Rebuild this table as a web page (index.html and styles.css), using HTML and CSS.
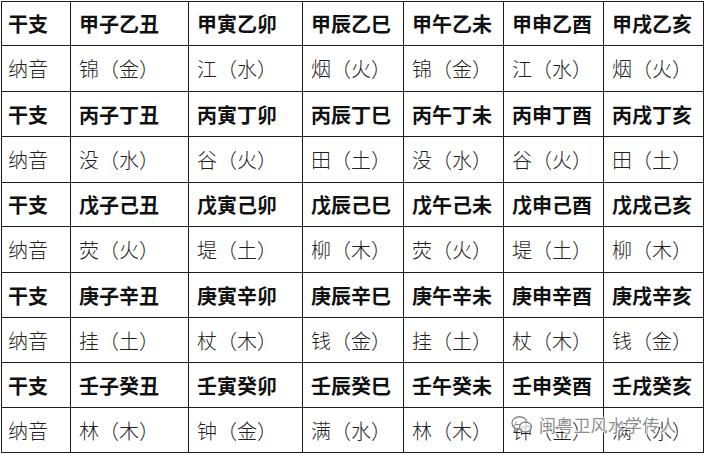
FILE: index.html
```html
<!DOCTYPE html>
<html lang="zh">
<head>
<meta charset="utf-8">
<title>六十甲子纳音表</title>
<link rel="stylesheet" href="styles.css">
</head>
<body>
<div class="sheet">
  <div class="table">
    <div class="c h first">干支</div><div class="c h">甲子乙丑</div><div class="c h">甲寅乙卯</div><div class="c h">甲辰乙巳</div><div class="c h">甲午乙未</div><div class="c h">甲申乙酉</div><div class="c h">甲戌乙亥</div>
    <div class="c n first">纳音</div><div class="c n">锦（金）</div><div class="c n">江（水）</div><div class="c n">烟（火）</div><div class="c n">锦（金）</div><div class="c n">江（水）</div><div class="c n">烟（火）</div>
    <div class="c h first">干支</div><div class="c h">丙子丁丑</div><div class="c h">丙寅丁卯</div><div class="c h">丙辰丁巳</div><div class="c h">丙午丁未</div><div class="c h">丙申丁酉</div><div class="c h">丙戌丁亥</div>
    <div class="c n first">纳音</div><div class="c n">没（水）</div><div class="c n">谷（火）</div><div class="c n">田（土）</div><div class="c n">没（水）</div><div class="c n">谷（火）</div><div class="c n">田（土）</div>
    <div class="c h first">干支</div><div class="c h">戊子己丑</div><div class="c h">戊寅己卯</div><div class="c h">戊辰己巳</div><div class="c h">戊午己未</div><div class="c h">戊申己酉</div><div class="c h">戊戌己亥</div>
    <div class="c n first">纳音</div><div class="c n">荧（火）</div><div class="c n">堤（土）</div><div class="c n">柳（木）</div><div class="c n">荧（火）</div><div class="c n">堤（土）</div><div class="c n">柳（木）</div>
    <div class="c h first">干支</div><div class="c h">庚子辛丑</div><div class="c h">庚寅辛卯</div><div class="c h">庚辰辛巳</div><div class="c h">庚午辛未</div><div class="c h">庚申辛酉</div><div class="c h">庚戌辛亥</div>
    <div class="c n first">纳音</div><div class="c n">挂（土）</div><div class="c n">杖（木）</div><div class="c n">钱（金）</div><div class="c n">挂（土）</div><div class="c n">杖（木）</div><div class="c n">钱（金）</div>
    <div class="c h first">干支</div><div class="c h">壬子癸丑</div><div class="c h">壬寅癸卯</div><div class="c h">壬辰癸巳</div><div class="c h">壬午癸未</div><div class="c h">壬申癸酉</div><div class="c h">壬戌癸亥</div>
    <div class="c n first">纳音</div><div class="c n">林（木）</div><div class="c n">钟（金）</div><div class="c n">满（水）</div><div class="c n">林（木）</div><div class="c n">钟（金）</div><div class="c n">满（水）</div>
  </div>
  <div class="watermark">
    <svg class="wm-icon" width="22" height="20" viewBox="0 0 22 20">
      <ellipse cx="8.5" cy="8" rx="7.5" ry="6.3" fill="#fff" fill-opacity="0.5" stroke="#8a8a8a" stroke-width="1.4"/>
      <path d="M4 13 L3 17 L7.5 14.2" fill="none" stroke="#8a8a8a" stroke-width="1.2"/>
      <ellipse cx="14.5" cy="12" rx="6" ry="5" fill="#fff" fill-opacity="0.7" stroke="#8a8a8a" stroke-width="1.4"/>
    </svg>
    <span class="wm-text">闽粤卫风水学传人</span>
  </div>
</div>
</body>
</html>
```
FILE: styles.css
```css
html, body {
  margin: 0;
  padding: 0;
  background: #fff;
}
.sheet {
  position: relative;
  width: 705px;
  height: 455px;
  padding: 1px 0 0 1px;
  box-sizing: border-box;
}
.table {
  display: grid;
  grid-template-columns: 69px 118px 114px 101px 100px 100px 100px;
  grid-template-rows: 44px 46px 45px 46px 44px 46px 45px 45px 45px 45px;
  border-left: 1px solid #1c1c1c;
  border-top: 1px solid #1c1c1c;
  width: max-content;
}
.c {
  border-right: 1px solid #1c1c1c;
  border-bottom: 1px solid #1c1c1c;
  display: flex;
  align-items: center;
  padding-left: 8px;
  font-size: 20px;
  white-space: nowrap;
  overflow: hidden;
  font-family: "Noto Sans CJK SC", "Noto Sans CJK JP", sans-serif;
}
.c.first {
  padding-left: 6px;
}
.h {
  font-weight: 700;
  color: #111;
}
.n {
  font-weight: 300;
  color: #1f1f1f;
}
.watermark {
  position: absolute;
  left: 511px;
  top: 412px;
  display: flex;
  align-items: center;
  gap: 6px;
}
.wm-text {
  font-family: "Noto Sans CJK SC", sans-serif;
  font-size: 17px;
  letter-spacing: 0.2px;
  color: rgba(120, 120, 120, 0.85);
  text-shadow: 0 0 2px #fff, 0 0 2px #fff, 1px 1px 1px #fff, -1px -1px 1px #fff;
}
```
